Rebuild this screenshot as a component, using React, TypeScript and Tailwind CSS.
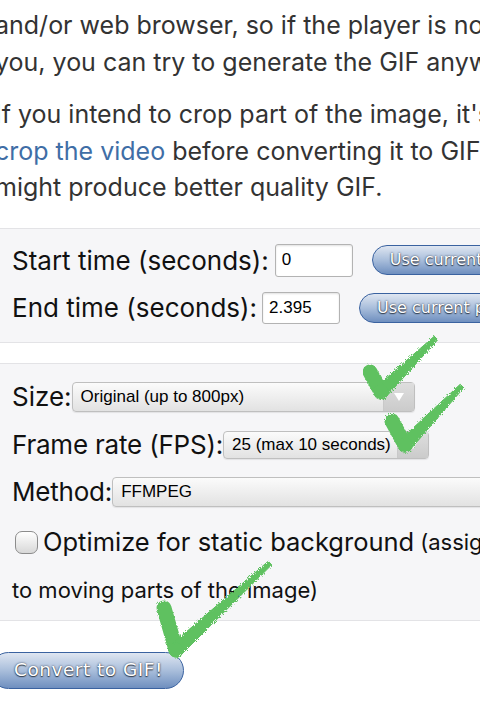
import React from 'react';

type Pt = [number, number];

// hand-drawn green tick laid over the form
const Tick = ({ a, v, e }: { a: Pt; v: Pt; e: Pt }) => {
  const dx = e[0] - v[0];
  const dy = e[1] - v[1];
  const len = Math.hypot(dx, dy);
  const nx = -dy / len;
  const ny = dx / len;
  const pts = [
    [v[0] + nx * 7, v[1] + ny * 7],
    [e[0] + nx * 2.5, e[1] + ny * 2.5],
    [e[0] - nx * 2.5, e[1] - ny * 2.5],
    [v[0] - nx * 7, v[1] - ny * 7],
  ]
    .map((p) => p.join(','))
    .join(' ');
  return (
    <g filter="url(#rough)" fill="#5ec160" stroke="#5ec160">
      <line x1={a[0]} y1={a[1]} x2={v[0]} y2={v[1]} strokeWidth={15} strokeLinecap="round" />
      <polygon points={pts} strokeWidth={1} />
      <circle cx={v[0]} cy={v[1]} r={7.5} stroke="none" />
    </g>
  );
};

const BlueButton = ({ label, className }: { label: string; className: string }) => (
  <button
    className={`shrink-0 rounded-full border border-[#3a62a0] bg-linear-to-b from-[#dfe6f1] via-[#a9bedb] to-[#6f8fbf] font-['DejaVu_Sans',sans-serif] text-white whitespace-nowrap [text-shadow:0_0_2px_rgba(20,30,50,0.9),0_1px_1px_rgba(0,0,0,0.6)] ${className}`}
  >
    {label}
  </button>
);

const TextInput = ({ value, className }: { value: string; className: string }) => (
  <div
    className={`shrink-0 flex items-center rounded-[3px] border border-[#b3b3b3] bg-white pl-[6px] font-['Liberation_Sans',Arial,sans-serif] text-[17px] text-black shadow-[inset_0_1px_2px_rgba(0,0,0,0.12)] ${className}`}
  >
    {value}
  </div>
);

const Select = ({ value, className }: { value: string; className: string }) => (
  <div
    className={`shrink-0 flex items-stretch rounded-[4px] border border-[#bfbfbf] bg-linear-to-b from-[#fbfbfb] to-[#e2e2e2] font-['Liberation_Sans',Arial,sans-serif] text-[17px] text-black shadow-[0_1px_1px_rgba(0,0,0,0.08)] ${className}`}
  >
    <div className="flex-1 flex items-center pl-[8px] whitespace-nowrap overflow-hidden">{value}</div>
    <div className="w-[31px] flex items-center justify-center border-l border-[#c9c9c9] bg-linear-to-b from-[#dedede] to-[#cbcbcb]">
      <span className="block w-0 h-0 border-l-[5px] border-r-[5px] border-t-[8px] border-l-transparent border-r-transparent border-t-white" />
    </div>
  </div>
);

const App = () => {
  return (
    <div className="relative w-[480px] h-[708px] overflow-hidden bg-white">
      {/* intro text, page is scrolled a little to the right */}
      <div className="ml-[-5px] pt-[7px] font-['Inter','Noto_Sans',sans-serif] text-[25px] leading-[36.5px] text-[#333] whitespace-nowrap">
        <p>
          and/or web browser, so if the player is not working for
          <br />
          you, you can try to generate the GIF anyway.
        </p>
        <p className="mt-[16px]">
          If you intend to crop part of the image, it's better to
          <br />
          <a className="text-[#3f6ea6]">crop the video</a> before converting it to GIF, it
          <br />
          might produce better quality GIF.
        </p>
      </div>

      {/* start / end time */}
      <div className="mt-[22px] w-[560px] border-y border-[#e3e3e6] bg-[#f6f6f8] pt-[15px] pb-[18px] pl-[12px] font-['Inter','Noto_Sans',sans-serif] text-[26px] text-[#111] whitespace-nowrap">
        <div className="flex items-center h-[33px]">
          <span>Start time (seconds):</span>
          <TextInput value="0" className="ml-[6px] w-[78px] h-[33px]" />
          <BlueButton label="Use current position" className="ml-[19px] h-[30px] pl-[17px] pr-[17px] text-[16px]" />
        </div>
        <div className="flex items-center h-[32px] mt-[15px]">
          <span>End time (seconds):</span>
          <TextInput value="2.395" className="ml-[5px] w-[78px] h-[32px]" />
          <BlueButton label="Use current position" className="ml-[19px] h-[30px] pl-[17px] pr-[17px] text-[16px]" />
        </div>
      </div>

      {/* output options */}
      <div className="mt-[20px] w-[560px] border-y border-[#e3e3e6] bg-[#f6f6f8] pt-[18px] pb-[12px] pl-[12px] font-['Inter','Noto_Sans',sans-serif] text-[26px] text-[#111] whitespace-nowrap">
        <div className="flex items-center h-[30px]">
          <span>Size:</span>
          <Select value="Original (up to 800px)" className="ml-0 w-[343px] h-[30px]" />
        </div>
        <div className="flex items-center h-[28px] mt-[19px]">
          <span className="tracking-[-0.2px]">Frame rate (FPS):</span>
          <Select value="25 (max 10 seconds)" className="ml-0 w-[206px] h-[28px]" />
        </div>
        <div className="flex items-center h-[30px] mt-[18px]">
          <span className="tracking-[-0.2px]">Method:</span>
          <Select value="FFMPEG" className="ml-0 w-[420px] h-[30px]" />
        </div>
        <div className="mt-[18px] flex items-center h-[36px]">
          <span className="shrink-0 ml-[3px] w-[23px] h-[23px] rounded-[7px] border border-[#8c8c8c] bg-linear-to-b from-white to-[#d8d8d8]" />
          <span className="ml-[5px] text-[25.5px]">Optimize for static background</span>
          <span className="ml-[6px] text-[22px]">(assign more colors</span>
        </div>
        <div className="mt-[11px] h-[36px] leading-[36px] text-[22px]">to moving parts of the image)</div>
      </div>

      <div className="mt-[31px] ml-[-10px]">
        <BlueButton label="Convert to GIF!" className="h-[37px] w-[194px] text-left pl-[23px] text-[18.5px] tracking-[0.5px]" />
      </div>

      <svg className="pointer-events-none absolute inset-0" width={480} height={708}>
        <defs>
          <filter id="rough">
            <feTurbulence type="fractalNoise" baseFrequency="0.7" numOctaves={2} seed={3} />
            <feDisplacementMap in="SourceGraphic" scale={4} />
          </filter>
        </defs>
        <Tick a={[370, 372]} v={[381, 392]} e={[436, 338]} />
        <Tick a={[392, 421]} v={[405, 445]} e={[462, 386]} />
        <Tick a={[164, 608]} v={[176, 650]} e={[270, 563]} />
      </svg>
    </div>
  );
};

export default App;
